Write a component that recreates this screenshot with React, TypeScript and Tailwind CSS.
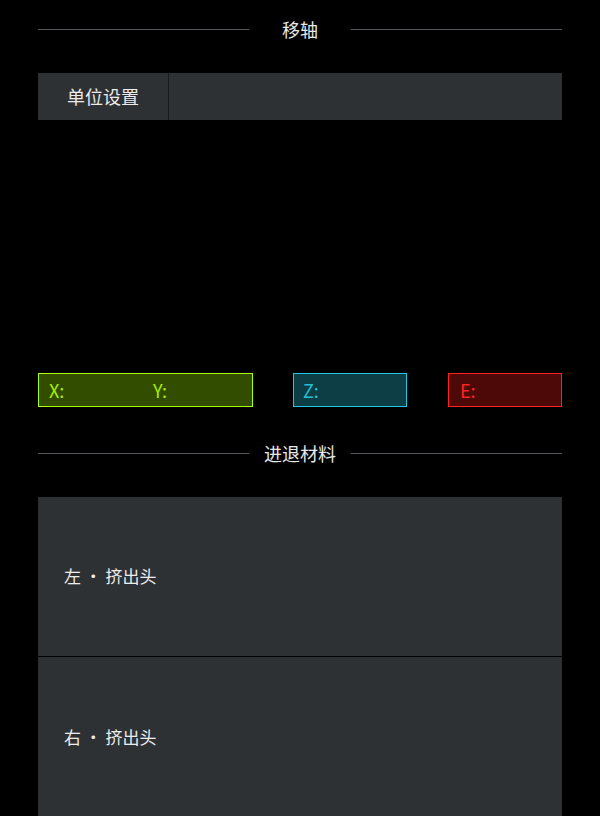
import React from "react";

function SectionTitle({ title }: { title: string }) {
  return (
    <div className="flex items-center h-[58px]">
      <div className="flex-1 h-px bg-[#555a5e]" />
      <div className="w-[102px] text-center text-[18px] leading-none text-[#e8e8e8]">{title}</div>
      <div className="flex-1 h-px bg-[#555a5e]" />
    </div>
  );
}

export default function App() {
  return (
    <div
      className="w-[600px] h-[816px] overflow-hidden bg-black px-[38px]"
      style={{ fontFamily: '"Noto Sans CJK SC", "Noto Sans", sans-serif' }}
    >
      <SectionTitle title="移轴" />
      <div className="mt-[15px] h-[47px] bg-[#2e3134] flex">
        <div className="w-[131px] border-r border-[#1a1c1e] flex items-center justify-center text-[18px] text-[#ececec]">
          单位设置
        </div>
      </div>
      <div className="h-[253px]" />
      <div className="flex h-[34px]">
        <div className="w-[215px] border border-[#aaff00] bg-[#334d00] flex items-center text-[18px] text-[#a8ee00]">
          <span className="ml-[10px] w-[104px]">X:</span>
          <span>Y:</span>
        </div>
        <div className="ml-[40px] w-[114px] border border-[#20c8e0] bg-[#0d3d45] flex items-center text-[18px] text-[#22c0d4]">
          <span className="ml-[9px]">Z:</span>
        </div>
        <div className="ml-[41px] w-[114px] border border-[#ff2020] bg-[#4d0808] flex items-center text-[18px] text-[#ff2424]">
          <span className="ml-[11px]">E:</span>
        </div>
      </div>
      <div className="mt-[17px]">
        <SectionTitle title="进退材料" />
      </div>
      <div className="mt-[15px] flex flex-col gap-px">
        <div className="h-[159px] bg-[#2e3134] flex items-center pl-[26px] text-[17px] text-[#ececec]">
          <span className="-mt-px">左 · 挤出头</span>
        </div>
        <div className="h-[160px] bg-[#2e3134] flex items-center pl-[26px] text-[17px] text-[#ececec]">
          <span className="-mt-px">右 · 挤出头</span>
        </div>
      </div>
    </div>
  );
}
